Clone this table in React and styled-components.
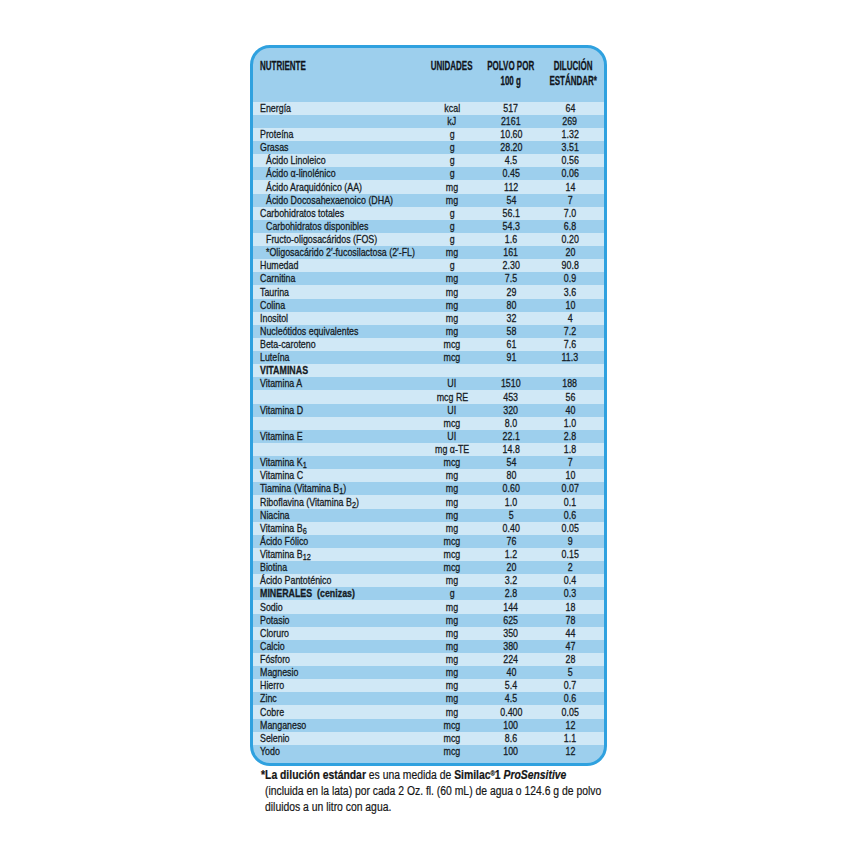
import React from 'react'
import styled, { createGlobalStyle } from 'styled-components'

const GlobalStyle = createGlobalStyle`
  body {
    margin: 0;
    background: #ffffff;
  }
`

// no condensed face installed, so Arial metrics squeezed horizontally
const sans = `"Liberation Sans", Arial, sans-serif`

const Page = styled.div`
  width: 357px;
  margin: 45px auto 0;
  font-family: ${sans};
  color: #151b24;
`

const Panel = styled.div`
  border: 3px solid #2fa1df;
  border-radius: 20px;
  background: #9dcfed;
  padding-bottom: 4.8px;
  overflow: hidden;
`

const Squeeze = styled.span`
  display: inline-block;
  white-space: pre;
  transform: scaleX(${(p) => p.$k});
  transform-origin: ${(p) => p.$origin || 'center'};
  -webkit-text-stroke: ${(p) => p.$stroke || 0.3}px currentColor;
`

const cols = `165px 54px 64px 54px`

const Head = styled.div`
  display: grid;
  grid-template-columns: ${cols};
  height: 53.7px;
  box-sizing: border-box;
  padding: 11px 7px 0;
  font-size: 12.5px;
  line-height: 14.5px;
  font-weight: bold;
  color: #10151c;
`

const HeadCell = styled.div`
  display: flex;
  justify-content: ${(p) => (p.$left ? 'flex-start' : 'center')};
  align-items: flex-start;
  text-align: center;
  padding-left: ${(p) => p.$shift || 0}px;
`

const Row = styled.div`
  display: grid;
  grid-template-columns: ${cols};
  align-items: center;
  height: 13.13px;
  padding: 0 7px;
  font-size: 11.5px;
  line-height: 13px;
  background: ${(p) => (p.$light ? '#d0e8f6' : 'transparent')};
`

const Name = styled.div`
  padding-left: ${(p) => (p.$indent ? 6 : 0)}px;
  font-weight: ${(p) => (p.$bold ? 'bold' : 'normal')};
`

const Cell = styled.div`
  display: flex;
  justify-content: center;
`

const Sub = styled.sub`
  font-size: 9.5px;
  line-height: 0;
  vertical-align: -1.5px;
`

const Note = styled.div`
  margin-top: 1px;
  padding-left: 11px;
  font-size: 12.5px;
  line-height: 16px;
  color: #151515;
`

const NoteLine = styled.div`
  padding-left: ${(p) => (p.$indent ? 4 : 0)}px;
`

const Reg = styled.sup`
  font-size: 7px;
  line-height: 0;
  vertical-align: 3px;
`

const rows = [
  ['Energía', 'kcal', '517', '64'],
  ['', 'kJ', '2161', '269'],
  ['Proteína', 'g', '10.60', '1.32'],
  ['Grasas', 'g', '28.20', '3.51'],
  ['Ácido Linoleico', 'g', '4.5', '0.56', 'i'],
  ['Ácido α-linolénico', 'g', '0.45', '0.06', 'i'],
  ['Ácido Araquidónico (AA)', 'mg', '112', '14', 'i'],
  ['Ácido Docosahexaenoico (DHA)', 'mg', '54', '7', 'i'],
  ['Carbohidratos totales', 'g', '56.1', '7.0'],
  ['Carbohidratos disponibles', 'g', '54.3', '6.8', 'i'],
  ['Fructo-oligosacáridos (FOS)', 'g', '1.6', '0.20', 'i'],
  ['*Oligosacárido 2\u2032-fucosilactosa (2\u2032-FL)', 'mg', '161', '20', 'i'],
  ['Humedad', 'g', '2.30', '90.8'],
  ['Carnitina', 'mg', '7.5', '0.9'],
  ['Taurina', 'mg', '29', '3.6'],
  ['Colina', 'mg', '80', '10'],
  ['Inositol', 'mg', '32', '4'],
  ['Nucleótidos equivalentes', 'mg', '58', '7.2'],
  ['Beta-caroteno', 'mcg', '61', '7.6'],
  ['Luteína', 'mcg', '91', '11.3'],
  ['VITAMINAS', '', '', '', 'b'],
  ['Vitamina A', 'UI', '1510', '188'],
  ['', 'mcg RE', '453', '56'],
  ['Vitamina D', 'UI', '320', '40'],
  ['', 'mcg', '8.0', '1.0'],
  ['Vitamina E', 'UI', '22.1', '2.8'],
  ['', 'mg α-TE', '14.8', '1.8'],
  [<>Vitamina K<Sub>1</Sub></>, 'mcg', '54', '7'],
  ['Vitamina C', 'mg', '80', '10'],
  [<>Tiamina (Vitamina B<Sub>1</Sub>)</>, 'mg', '0.60', '0.07'],
  [<>Riboflavina (Vitamina B<Sub>2</Sub>)</>, 'mg', '1.0', '0.1'],
  ['Niacina', 'mg', '5', '0.6'],
  [<>Vitamina B<Sub>6</Sub></>, 'mg', '0.40', '0.05'],
  ['Ácido Fólico', 'mcg', '76', '9'],
  [<>Vitamina B<Sub>12</Sub></>, 'mcg', '1.2', '0.15'],
  ['Biotina', 'mcg', '20', '2'],
  ['Ácido Pantoténico', 'mg', '3.2', '0.4'],
  ['MINERALES  (cenizas)', 'g', '2.8', '0.3', 'b'],
  ['Sodio', 'mg', '144', '18'],
  ['Potasio', 'mg', '625', '78'],
  ['Cloruro', 'mg', '350', '44'],
  ['Calcio', 'mg', '380', '47'],
  ['Fósforo', 'mg', '224', '28'],
  ['Magnesio', 'mg', '40', '5'],
  ['Hierro', 'mg', '5.4', '0.7'],
  ['Zinc', 'mg', '4.5', '0.6'],
  ['Cobre', 'mg', '0.400', '0.05'],
  ['Manganeso', 'mcg', '100', '12'],
  ['Selenio', 'mcg', '8.6', '1.1'],
  ['Yodo', 'mcg', '100', '12'],
]

const K_ROW = 0.77
const K_HEAD = 0.64
const K_NOTE = 0.83

export default function App() {
  return (
    <Page>
      <GlobalStyle />
      <Panel>
        <Head>
          <HeadCell $left>
            <Squeeze $k={K_HEAD} $origin="left">NUTRIENTE</Squeeze>
          </HeadCell>
          <HeadCell>
            <Squeeze $k={K_HEAD}>UNIDADES</Squeeze>
          </HeadCell>
          <HeadCell>
            <Squeeze $k={K_HEAD}>
              POLVO POR
              <br />
              100 g
            </Squeeze>
          </HeadCell>
          <HeadCell $shift={6}>
            <Squeeze $k={K_HEAD}>
              DILUCIÓN
              <br />
              ESTÁNDAR*
            </Squeeze>
          </HeadCell>
        </Head>
        {rows.map(([name, unit, powder, dil, flag], i) => (
          <Row key={i} $light={i % 2 === 0}>
            <Name $indent={flag === 'i'} $bold={flag === 'b'}>
              <Squeeze $k={K_ROW} $origin="left">{name}</Squeeze>
            </Name>
            <Cell>
              <Squeeze $k={K_ROW}>{unit}</Squeeze>
            </Cell>
            <Cell>
              <Squeeze $k={K_ROW}>{powder}</Squeeze>
            </Cell>
            <Cell>
              <Squeeze $k={K_ROW}>{dil}</Squeeze>
            </Cell>
          </Row>
        ))}
      </Panel>
      <Note>
        <NoteLine>
          <Squeeze $k={K_NOTE} $origin="left" $stroke={0.2}>
            <b>*La dilución estándar</b> es una medida de{' '}
            <b>
              Similac<Reg>®</Reg>1 <i>ProSensitive</i>
            </b>
          </Squeeze>
        </NoteLine>
        <NoteLine $indent>
          <Squeeze $k={K_NOTE} $origin="left" $stroke={0.2}>
            (incluida en la lata) por cada 2 Oz. fl. (60 mL) de agua o 124.6 g de polvo
          </Squeeze>
        </NoteLine>
        <NoteLine $indent>
          <Squeeze $k={K_NOTE} $origin="left" $stroke={0.2}>
            diluidos a un litro con agua.
          </Squeeze>
        </NoteLine>
      </Note>
    </Page>
  )
}
